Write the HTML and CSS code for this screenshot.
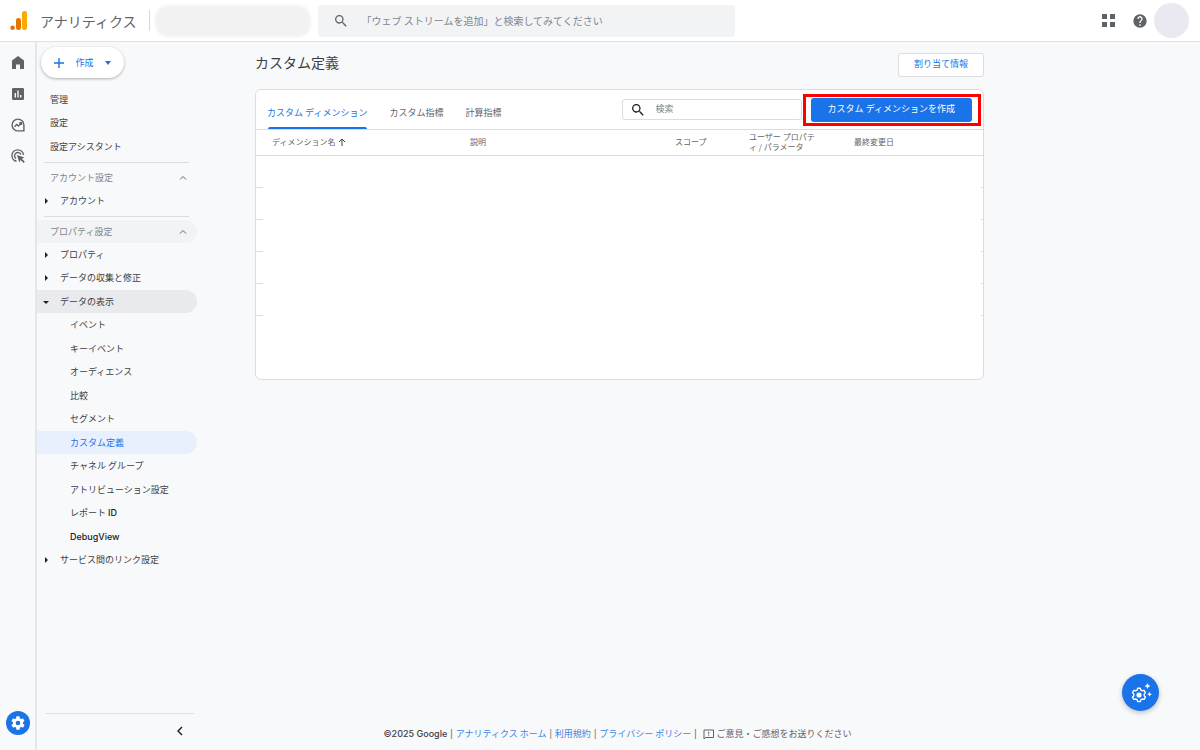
FILE: index.html
```html
<!DOCTYPE html>
<html lang="ja">
<head>
<meta charset="utf-8">
<title>アナリティクス</title>
<link rel="stylesheet" href="styles.css">
</head>
<body>
<header class="topbar">
  <div class="brand">
    <svg class="logo" viewBox="0 0 18 20" aria-hidden="true"><rect x="12" y="0" width="5" height="19" rx="2.3" fill="#f9ab00"/><rect x="6" y="7" width="5" height="12" rx="2.3" fill="#e37400"/><circle cx="2.6" cy="16.8" r="2.3" fill="#e37400"/></svg>
    <span class="brand-name">アナリティクス</span>
  </div>
  <div class="account-mask"></div>
  <label class="global-search">
    <svg class="icon-search" viewBox="0 0 24 24" aria-hidden="true"><path d="M15.5 14h-.8l-.3-.3A6.5 6.5 0 1 0 13.700 14.400l.3.3v.8l5 5 1.500-1.500zM9.500 14a4.500 4.500 0 1 1 0-9 4.500 4.500 0 0 1 0 9z"/></svg>
    <input type="search" aria-label="検索" placeholder="「ウェブ ストリームを追加」と検索してみてください">
  </label>
  <div class="top-actions">
    <button class="icon-btn" aria-label="アプリ"><svg width="13" height="13" viewBox="0 0 13 13"><path d="M0 0h5v5H0zM8 0h5v5H8zM0 8h5v5H0zM8 8h5v5H8z"/></svg></button>
    <button class="icon-btn" aria-label="ヘルプ"><svg width="16" height="16" viewBox="0 0 24 24"><path d="M12 2a10 10 0 1 0 0 20 10 10 0 0 0 0-20zm1 17h-2v-2h2zm2.070-7.750-.9.920C13.450 12.900 13 13.500 13 15h-2v-.5c0-1.100.45-2.100 1.170-2.830l1.240-1.260A2 2 0 1 0 10 9H8a4 4 0 1 1 7.070 2.250z"/></svg></button>
    <span class="avatar"></span>
  </div>
</header>
<div class="shell">
  <nav class="rail" aria-label="メイン">
    <a href="#" aria-label="ホーム"><svg width="12" height="13" viewBox="0 0 12 13"><path d="M6 0 0 4.500V13h4V8.500h4V13h4V4.500z"/></svg></a>
    <a href="#" aria-label="レポート"><svg width="12" height="12" viewBox="0 0 12 12"><path fill-rule="evenodd" d="M1.300 0h9.400Q12 0 12 1.300v9.400q0 1.300-1.300 1.300H1.300Q0 12 0 10.700V1.300Q0 0 1.300 0zM2.600 5v4.500H4V5zm2.700-2.500v7h1.400v-7zM8 7v2.500h1.400V7z"/></svg></a>
    <a href="#" aria-label="探索"><svg width="14" height="14" viewBox="0 0 14 14"><path d="M12.900 7v5.900H7A5.900 5.900 0 1 1 12.900 7z" class="line"/><path d="m3.500 8.700 2.200-2.200 1.700 1.500 2.900-3M8.300 4.700h2.200v2.200" class="line"/></svg></a>
    <a href="#" aria-label="広告"><svg width="14" height="14" viewBox="0 0 14 14"><path d="M5.500 12.300A5.800 5.800 0 1 1 12.500 6M5 9.500A3.300 3.300 0 1 1 9.900 5.500" class="line"/><path d="m6 6 7.500 2.500-2.700 1.300 3 3-1.200 1.200-3-3-1.300 2.600z"/></svg></a>
    <a href="#" class="rail-admin" aria-label="管理"><svg width="16" height="16" viewBox="0 0 24 24"><path d="M19.400 13c0-.3.100-.6.100-1s0-.7-.1-1l2.100-1.600c.2-.2.200-.4.100-.6l-2-3.500c-.1-.2-.4-.3-.6-.2l-2.500 1a7 7 0 0 0-1.700-1L14.500 2.400a.5.500 0 0 0-.5-.4h-4a.5.500 0 0 0-.5.400l-.4 2.700a7 7 0 0 0-1.700 1l-2.500-1c-.2-.1-.5 0-.6.200l-2 3.500c-.1.200-.1.500.1.600L4.600 11a8 8 0 0 0 0 2l-2.100 1.600c-.2.200-.2.400-.1.600l2 3.500c.1.200.4.300.6.200l2.500-1a7 7 0 0 0 1.700 1l.3 2.700c0 .2.200.4.500.4h4c.3 0 .5-.2.500-.4l.4-2.700a7 7 0 0 0 1.700-1l2.500 1c.2.100.5 0 .6-.2l2-3.500c.1-.2.100-.5-.1-.6zM12 15.500a3.500 3.500 0 1 1 0-7 3.500 3.500 0 0 1 0 7z"/></svg></a>
  </nav>
  <aside class="sidebar">
    <button class="create-btn"><svg width="12" height="12" viewBox="0 0 12 12"><path d="M6 1v10M1 6h10" class="stroke"/></svg><span>作成</span><svg width="8" height="4" viewBox="0 0 8 4"><path d="M1 0h6L4 4z"/></svg></button>
    <ul class="menu">
      <li><a href="#">管理</a></li>
      <li><a href="#">設定</a></li>
      <li><a href="#">設定アシスタント</a></li>
    </ul>
    <hr>
    <button class="section">アカウント設定<svg class="chevron" viewBox="0 0 8 5"><path d="m1 4.500 3-3 3 3"/></svg></button>
    <ul class="menu tree">
      <li><a href="#"><svg class="caret" viewBox="0 0 6 6"><path d="M2 0v6l3-3z"/></svg>アカウント</a></li>
    </ul>
    <hr>
    <button class="section hovered">プロパティ設定<svg class="chevron" viewBox="0 0 8 5"><path d="m1 4.500 3-3 3 3"/></svg></button>
    <ul class="menu tree">
      <li><a href="#"><svg class="caret" viewBox="0 0 6 6"><path d="M2 0v6l3-3z"/></svg>プロパティ</a></li>
      <li><a href="#"><svg class="caret" viewBox="0 0 6 6"><path d="M2 0v6l3-3z"/></svg>データの収集と修正</a></li>
      <li><a href="#" class="open"><svg class="caret" viewBox="0 0 6 6"><path d="M0 2h6L3 5z"/></svg>データの表示</a></li>
      <li class="sub"><a href="#">イベント</a></li>
      <li class="sub"><a href="#">キーイベント</a></li>
      <li class="sub"><a href="#">オーディエンス</a></li>
      <li class="sub"><a href="#">比較</a></li>
      <li class="sub"><a href="#">セグメント</a></li>
      <li class="sub"><a href="#" class="current" aria-current="page">カスタム定義</a></li>
      <li class="sub"><a href="#">チャネル グループ</a></li>
      <li class="sub"><a href="#">アトリビューション設定</a></li>
      <li class="sub"><a href="#">レポート <span class="latin">ID</span></a></li>
      <li class="sub"><a href="#" class="latin">DebugView</a></li>
      <li><a href="#"><svg class="caret" viewBox="0 0 6 6"><path d="M2 0v6l3-3z"/></svg>サービス間のリンク設定</a></li>
    </ul>
    <div class="sidebar-foot"><button class="icon-btn" aria-label="折りたたむ"><svg width="6" height="10" viewBox="0 0 6 10"><path d="M5 1 1 5l4 4" class="collapse"/></svg></button></div>
  </aside>
  <main class="content">
    <div class="page-head">
      <h1>カスタム定義</h1>
      <button class="outline-btn">割り当て情報</button>
    </div>
    <section class="card">
      <div class="toolbar">
        <div class="tabs" role="tablist">
          <button role="tab" aria-selected="true" class="tab active">カスタム ディメンション</button>
          <button role="tab" aria-selected="false" class="tab">カスタム指標</button>
          <button role="tab" aria-selected="false" class="tab">計算指標</button>
        </div>
        <label class="table-search">
          <svg class="icon-search" viewBox="0 0 24 24" aria-hidden="true"><path d="M15.500 14h-.8l-.3-.3A6.500 6.500 0 1 0 13.700 14.400l.3.3v.8l5 5 1.500-1.500zM9.500 14a4.500 4.500 0 1 1 0-9 4.500 4.500 0 0 1 0 9z"/></svg>
          <input type="search" aria-label="検索" placeholder="検索">
        </label>
        <div class="highlight"><button class="primary-btn">カスタム ディメンションを作成</button></div>
      </div>
      <div class="table-wrap">
        <table>
          <colgroup><col class="c-name"><col class="c-desc"><col class="c-scope"><col class="c-param"><col></colgroup>
          <thead><tr>
            <th>ディメンション名<svg class="sort" viewBox="0 0 8 8"><path d="M4 8V1M1 4l3-3 3 3"/></svg></th>
            <th>説明</th><th>スコープ</th><th>ユーザー プロパテ<br>ィ / パラメータ</th><th>最終変更日</th>
          </tr></thead>
          <tbody>
            <tr><td colspan="5"></td></tr>
            <tr><td colspan="5"></td></tr>
            <tr><td colspan="5"></td></tr>
            <tr><td colspan="5"></td></tr>
            <tr><td colspan="5"></td></tr>
          </tbody>
        </table>
        <div class="rows-mask"></div>
      </div>
    </section>
    <footer class="footer">
      <span class="latin">©2025 Google</span><i>|</i><a href="#">アナリティクス ホーム</a><i>|</i><a href="#">利用規約</a><i>|</i><a href="#">プライバシー ポリシー</a><i>|</i>
      <button class="feedback"><svg width="11" height="11" viewBox="0 0 11 11"><path d="M1 10V1h9.500v7.500H2.500zM5.700 2.700v2.600M5.700 6.200v1"/></svg>ご意見・ご感想をお送りください</button>
    </footer>
  </main>
</div>
<button class="fab" aria-label="設定アシスタント"><svg width="22" height="22" viewBox="0 0 22 22"><path class="gear" d="M7.700 6.200h2.600l.6 1.900 1.300.7 1.900-.4 1.400 2.200-1.300 1.500v1.600l1.300 1.500-1.400 2.200-1.900-.4-1.300.7-.6 1.900H7.700l-.6-1.900-1.300-.7-1.900.4-1.400-2.200 1.300-1.500v-1.600L2.500 10.600l1.400-2.200 1.900.4 1.300-.7z"/><circle cx="9" cy="13" r="2.600"/><path d="m17.500 1 .9 2.100 2.100.9-2.100.9-.9 2.100-.9-2.100-2.100-.9 2.100-.9zM19.500 9.700l.7 1.800 1.800.7-1.800.7-.7 1.800-.7-1.800-1.800-.7 1.800-.7z"/></svg></button>
</body>
</html>
```

FILE: styles.css
```css
* { box-sizing: border-box; }
body {
  margin: 0;
  min-height: 100vh;
  display: flex;
  flex-direction: column;
  background: #f8f9fb;
  color: #3c4043;
  font: 9px/12px "Noto Sans CJK JP", sans-serif;
}
button, input { font: inherit; color: inherit; border: 0; margin: 0; padding: 0; background: none; }
input { min-width: 0; flex: 1; outline: 0; }
input::placeholder { color: #80868b; opacity: 1; }
a { color: inherit; text-decoration: none; }
ul { list-style: none; margin: 0; padding: 0; }
svg { flex: none; display: block; fill: #5f6368; }
.latin { font-family: Inter, "Noto Sans CJK JP", sans-serif; font-weight: 500; }
.line { fill: none; stroke: #5f6368; stroke-width: 1.4; }
.icon-search { width: 16px; height: 16px; }
.icon-btn { display: grid; place-items: center; }

/* Top bar */
.topbar {
  display: flex;
  align-items: center;
  height: 42px;
  padding: 0 11px 0 10px;
  background: #fff;
  border-bottom: 1px solid #dfe1e4;
}
.brand { display: flex; align-items: center; gap: 12px; height: 21px; padding-right: 13px; border-right: 1px solid #d5d7da; }
.logo { width: 18px; height: 20px; }
.brand-name { font-size: 14px; line-height: 20px; color: #5f6368; }
.account-mask { width: 156px; height: 32px; margin: 0 7px 0 5px; border-radius: 14px; background: #f2f2f2; filter: blur(1px); }
.global-search {
  display: flex;
  align-items: center;
  gap: 12px;
  flex: 0 1 417px;
  height: 32px;
  padding: 0 15px;
  border-radius: 4px;
  background: #f1f3f4;
}
.global-search input { font-size: 10px; }
.top-actions { display: flex; align-items: center; gap: 17px; margin-left: auto; }
.avatar { width: 35px; height: 35px; margin-left: -11px; border-radius: 50%; background: #eae8f1; }

.shell { flex: 1; display: flex; }

/* Icon rail */
.rail {
  width: 37px;
  padding: 5px 0 15px;
  border-right: 2px solid #e4e6e9;
  display: flex;
  flex-direction: column;
  align-items: center;
}
.rail a { display: grid; place-items: center; width: 24px; height: 31px; }
.rail .rail-admin { height: 24px; margin-top: auto; border-radius: 50%; background: #1a73e8; }
.rail-admin svg { fill: #fff; }

/* Sidebar */
.sidebar { width: 160px; padding: 5px 0 10px; display: flex; flex-direction: column; }
.create-btn {
  display: flex;
  align-items: center;
  justify-content: space-between;
  width: 83px;
  height: 31px;
  margin: 0 0 10px 4px;
  padding: 0 12px;
  border-radius: 16px;
  background: #fff;
  color: #1a73e8;
  box-shadow: 0 1px 3px rgba(60, 64, 67, .4);
}
.create-btn svg { fill: #1a73e8; }
.create-btn .stroke { stroke: #1a73e8; stroke-width: 1.4; }
.menu a { display: flex; align-items: center; height: 23px; padding-left: 13px; border-radius: 0 12px 12px 0; }
.menu li:nth-child(even) a { height: 24px; }
.tree a { padding-left: 6px; gap: 11px; }
.tree .sub a { padding-left: 33px; gap: 2px; }
.sub .latin { color: #202124; }
.caret { width: 6px; height: 6px; fill: #202124; }
.menu .open { background: #e8eaed; }
.menu .current { background: #e8f0fe; color: #1a73e8; }
.sidebar hr { width: 145px; margin: 4px 0 3px 7px; border: 0; border-top: 1px solid #dadce0; }
.section {
  display: flex;
  align-items: center;
  justify-content: space-between;
  height: 23px;
  padding: 0 10px 0 13px;
  border-radius: 0 12px 12px 0;
  color: #80868b;
}
.section.hovered { background: #f1f3f4; }
.chevron { width: 8px; height: 5px; fill: none; stroke: #5f6368; }
.sidebar-foot { display: flex; justify-content: flex-end; margin: auto 3px 0 8px; padding: 12px 11px 4px; border-top: 1px solid #dfe1e4; }
.collapse { fill: none; stroke: #202124; stroke-width: 1.5; }

/* Main content */
.content { flex: 1; display: flex; flex-direction: column; padding: 11px 216px 10px 58px; }
.page-head { display: flex; justify-content: space-between; align-items: flex-start; height: 36px; }
h1 { margin: 0; font-size: 14px; line-height: 18px; font-weight: 400; }
.outline-btn { height: 24px; padding: 0 15px 2px; border: 1px solid #dadce0; border-radius: 3px; background: #fff; color: #1a73e8; }
.card { border: 1px solid #dadce0; border-radius: 6px; background: #fff; }
.toolbar { display: flex; align-items: center; height: 39px; padding-right: 2px; }
.tabs { display: flex; align-self: stretch; gap: 22px; padding-left: 11px; margin-right: auto; }
.tab { position: relative; padding-top: 6px; color: #5f6368; white-space: nowrap; }
.tab.active { color: #1a73e8; }
.tab.active::after { content: ""; position: absolute; left: 1px; right: 0; bottom: 0; height: 2px; background: #1a73e8; border-radius: 2px 2px 0 0; }
.table-search { display: flex; align-items: center; gap: 10px; width: 180px; height: 21px; margin-right: 1px; padding: 0 7px; border: 1px solid #dadce0; border-radius: 3px; }
.table-search svg { fill: #202124; }
.table-search input { padding-bottom: 2px; }
.highlight { border: 3px solid #f00; padding: 1px 6px 1px 5px; }
.primary-btn { display: block; height: 24px; padding: 0 17px 2px; border-radius: 3px; background: #1a73e8; color: #fff; white-space: nowrap; }

.table-wrap { position: relative; padding-bottom: 63px; }
table { width: 100%; border-collapse: collapse; table-layout: fixed; }
.c-name { width: 198px; }
.c-desc { width: 205px; }
.c-scope { width: 74px; }
.c-param { width: 105px; }
thead tr { border-top: 1px solid #dadce0; border-bottom: 1px solid #dadce0; }
th { height: 26px; padding: 0 0 2px 16px; text-align: left; font-size: 8px; line-height: 10px; font-weight: 400; color: #5f6368; white-space: nowrap; }
.sort { display: inline-block; width: 8px; height: 8px; margin-left: 3px; vertical-align: middle; fill: none; stroke: #3c4043; }
td { height: 32px; padding: 0; border-bottom: 1px solid #dadce0; }
.rows-mask { position: absolute; top: 28px; bottom: 4px; left: 7px; right: 2px; background: #fff; }

.footer { display: flex; align-items: center; justify-content: center; gap: 3px; margin-top: auto; padding-right: 4px; white-space: nowrap; color: #5f6368; }
.footer i { font-style: normal; color: #3c4043; }
.footer a { color: #4285e0; }
.footer .latin { color: #3c4043; }
.feedback { display: flex; align-items: center; gap: 3px; margin-left: 3px; }
.feedback path { fill: none; stroke: #5f6368; }

.fab {
  position: fixed;
  right: 41px;
  bottom: 39px;
  display: grid;
  place-items: center;
  width: 37px;
  height: 37px;
  border-radius: 50%;
  background: #1a73e8;
  box-shadow: 0 2px 5px rgba(60, 64, 67, .3);
}
.fab svg { fill: #fff; }
.fab .gear { fill: none; stroke: #fff; stroke-width: 1.4; stroke-linejoin: round; }
```
